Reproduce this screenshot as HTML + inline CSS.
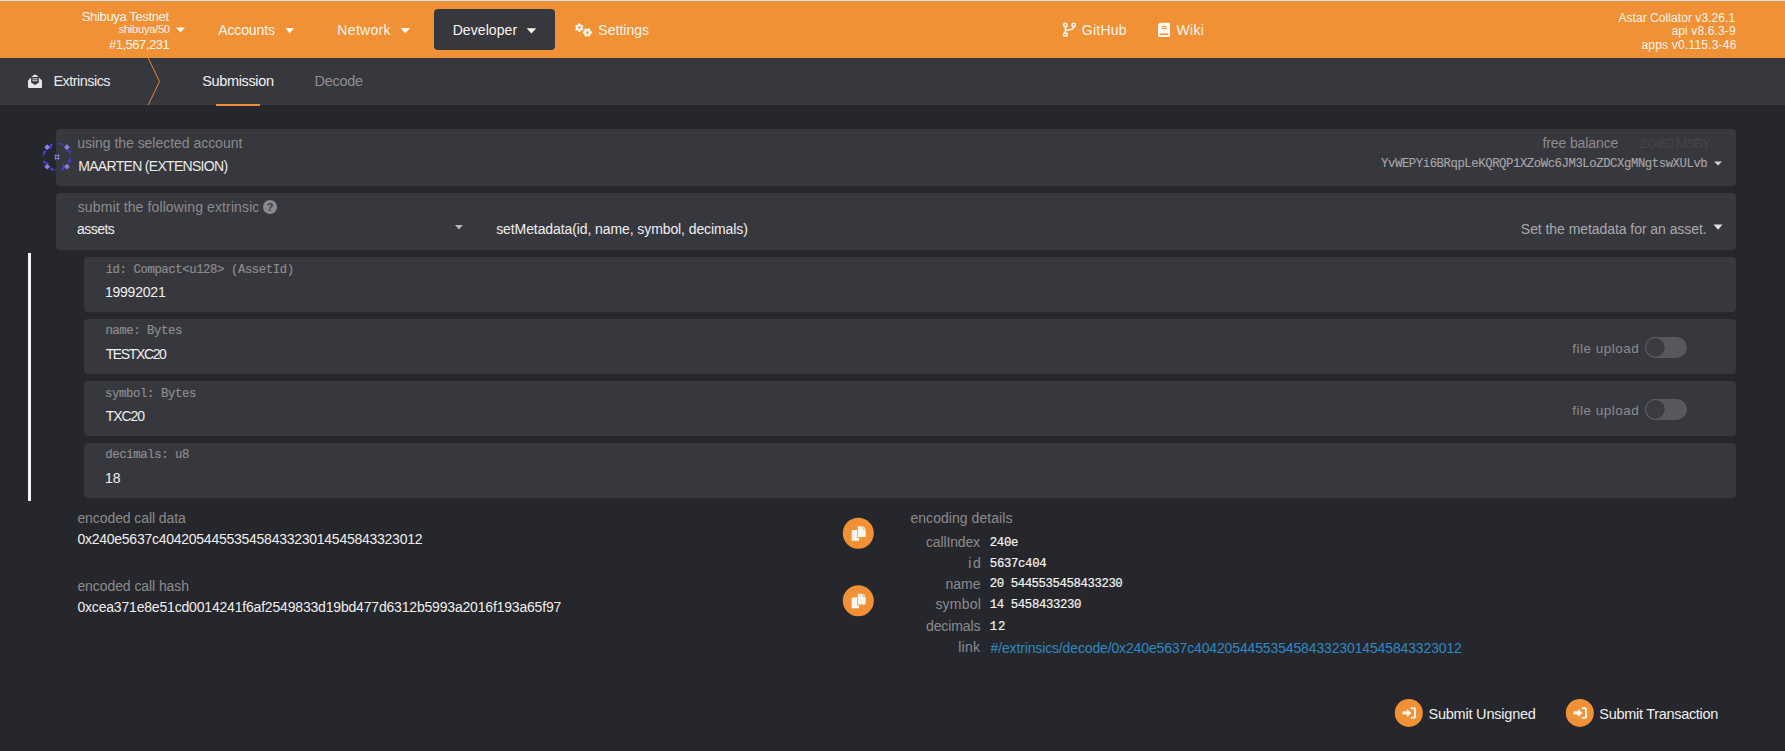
<!DOCTYPE html>
<html><head><meta charset="utf-8"><title>Extrinsics</title>
<style>
html,body{margin:0;padding:0;width:1785px;height:751px;overflow:hidden;background:#26272c;font-family:"Liberation Sans",sans-serif;}
.a{position:absolute;}
.ov{position:absolute;left:0;top:0;}
</style></head><body>
<div class="a" style="left:0;top:0;width:1785px;height:58px;background:#f19135"></div>
<div class="a" style="left:0;top:0;width:1785px;height:1px;background:#d2e0ec"></div>
<div class="a" style="left:434px;top:9px;width:121px;height:41px;border-radius:4px;background:#37383e"></div>
<div class="a" style="left:0;top:58px;width:1785px;height:47px;background:#37383d"></div>
<div class="a" style="left:0;top:104px;width:1785px;height:1px;background:#3b3c41"></div>
<div class="a" style="left:216px;top:104px;width:44px;height:2px;background:#f19135"></div>
<div class="a" style="left:56px;top:129px;width:1680px;height:57px;border-radius:4px;background:#37383e"></div>
<div class="a" style="left:56px;top:193px;width:1680px;height:57px;border-radius:4px;background:#37383e"></div>
<div class="a" style="left:28px;top:253px;width:3px;height:248px;background:#f4f4f4"></div>
<div class="a" style="left:84px;top:257px;width:1652px;height:55px;border-radius:4px;background:#37383e"></div>
<div class="a" style="left:84px;top:319px;width:1652px;height:55px;border-radius:4px;background:#37383e"></div>
<div class="a" style="left:84px;top:381px;width:1652px;height:55px;border-radius:4px;background:#37383e"></div>
<div class="a" style="left:84px;top:443px;width:1652px;height:55px;border-radius:4px;background:#37383e"></div>
<svg class="ov" width="1785" height="751" viewBox="0 0 1785 751">
<polygon points="176,27.5 185,27.5 180.5,32.5" fill="#fdf6ee"/><polygon points="285.3,27.9 294.1,27.9 289.70000000000005,33.4" fill="#fdf6ee"/><polygon points="400.6,27.9 410,27.9 405.3,33.4" fill="#fdf6ee"/><polygon points="526.7,28.2 536.2,28.2 531.45,33.6" fill="#fdf6ee"/><polygon points="1714,161.4 1722,161.4 1718.0,165.6" fill="#d0d0d0"/><polygon points="454.9,224.9 462.9,224.9 458.9,229.4" fill="#b9b9ba"/><polygon points="1713.6,224.6 1722.5,224.6 1718.05,229.8" fill="#e0e0e0"/><polygon points="582.58,27.94 583.47,29.00 582.60,30.51 581.24,30.27 580.65,30.61 580.17,31.91 578.43,31.91 577.95,30.61 577.36,30.27 576.00,30.51 575.13,29.00 576.02,27.94 576.02,27.26 575.13,26.20 576.00,24.69 577.36,24.93 577.95,24.59 578.43,23.29 580.17,23.29 580.65,24.59 581.24,24.93 582.60,24.69 583.47,26.20 582.58,27.26" fill="#fdf6ee"/><circle cx="579.3" cy="27.6" r="1.25" fill="#f19135"/><polygon points="590.55,31.09 591.91,31.59 591.91,33.41 590.55,33.91 590.19,34.52 590.45,35.95 588.86,36.86 587.76,35.93 587.04,35.93 585.94,36.86 584.35,35.95 584.61,34.52 584.25,33.91 582.89,33.41 582.89,31.59 584.25,31.09 584.61,30.48 584.35,29.05 585.94,28.14 587.04,29.07 587.76,29.07 588.86,28.14 590.45,29.05 590.19,30.48" fill="#fdf6ee"/><circle cx="587.4" cy="32.5" r="1.3" fill="#f19135"/><g fill="none" stroke="#fdf6ee" stroke-width="1.6"><circle cx="1065.4" cy="24.9" r="1.7"/><circle cx="1073.7" cy="24.9" r="1.7"/><circle cx="1065.4" cy="34.6" r="1.7"/><path d="M1065.4 26.6 V32.9 M1073.7 26.6 C1073.7 29.6 1071 29.7 1065.4 30.2"/></g><path d="M1159.6 22.8 H1168.6 Q1170 22.8 1170 24.2 V37 H1159.4 Q1158 37 1158 35.6 V24.6 Z" fill="#fdf6ee"/><rect x="1161.6" y="26.2" width="5.4" height="0.9" fill="#f19135"/><rect x="1161.6" y="28.0" width="5.4" height="0.9" fill="#f19135"/><rect x="1159.8" y="33.6" width="8.4" height="1.5" rx="0.6" fill="#f19135"/><path d="M28 80.4 L33.6 75 Q35 73.9 36.4 75 L42 80.4 V87 Q42 88 41 88 H29 Q28 88 28 87 Z" fill="#e6e6e6"/><path d="M31.1 76.9 H38.9 V82.4 L35 85 L31.1 82.4 Z" fill="#37383d"/><rect x="32.4" y="78.4" width="5.2" height="0.9" fill="#e6e6e6"/><rect x="32.4" y="80.3" width="5.2" height="0.9" fill="#e6e6e6"/><polyline points="148.2,58 159.5,81.5 148.2,105" fill="none" stroke="#f19135" stroke-width="0.9"/><g fill="#4a3bd8"><polygon points="50,150.5 53.2,143.5 49.5,144.5"/><polygon points="57.5,143 64.5,146.2 62,143.2"/><polygon points="64.5,150 71,153.6 70.5,150.5"/><polygon points="43,157 47,150.5 43.2,150.8"/><polygon points="43,160 50,163.7 43.5,163.5"/><polygon points="50,167 56.5,170.6 51,170.5"/><polygon points="60.8,170.6 64,162.6 64.2,170.3"/><polygon points="71,156.8 67,162.6 70.8,162.4"/></g><g fill="#8a80e6"><polygon points="47.2,144.3 50.1,147.2 47.2,150.1 44.3,147.2"/><polygon points="66.9,144.3 69.8,147.2 66.9,150.1 64,147.2"/><polygon points="47.2,163.8 50.1,166.7 47.2,169.6 44.3,166.7"/><polygon points="66.9,163.8 69.8,166.7 66.9,169.6 64,166.7"/></g><g fill="none" stroke="#8a80e6" stroke-width="0.9"><path d="M55.6 154.3 V159.8 M58.4 154.3 V159.8 M54.4 155.6 H59.7 M54.4 158.4 H59.7"/></g><circle cx="270" cy="207" r="7" fill="#8c8b8c"/><text x="270" y="211" text-anchor="middle" font-family="'Liberation Sans', sans-serif" font-weight="bold" font-size="11" fill="#37383e">?</text><rect x="1645" y="336.9" width="42" height="21" rx="10.5" fill="#57585d"/><circle cx="1655.4" cy="347.4" r="9.9" fill="#3b3c41" stroke="#606166" stroke-width="1"/><rect x="1645" y="398.9" width="42" height="21" rx="10.5" fill="#57585d"/><circle cx="1655.4" cy="409.4" r="9.9" fill="#3b3c41" stroke="#606166" stroke-width="1"/><circle cx="858.3" cy="533.3" r="15.5" fill="#f19135"/><rect x="851.7" y="530.0" width="7.4" height="10.7" rx="0.8" fill="#fdf6ee"/><path d="M857 525.6 H863 L866.4 529.0 V537.7 H857 Z" fill="#f19135"/><path d="M857.7 526.3 H862.6 V529.4 H865.7 V536.5 Q865.7 537.0 865.2 537.0 H858.2 Q857.7 537.0 857.7 536.5 Z" fill="#fdf6ee"/><path d="M863.2 526.3 L865.7 528.8 H863.2 Z" fill="#fdf6ee"/><circle cx="858.3" cy="600.8" r="15.5" fill="#f19135"/><rect x="851.7" y="597.5" width="7.4" height="10.7" rx="0.8" fill="#fdf6ee"/><path d="M857 593.1 H863 L866.4 596.5 V605.2 H857 Z" fill="#f19135"/><path d="M857.7 593.8 H862.6 V596.9 H865.7 V604.0 Q865.7 604.5 865.2 604.5 H858.2 Q857.7 604.5 857.7 604.0 Z" fill="#fdf6ee"/><path d="M863.2 593.8 L865.7 596.3 H863.2 Z" fill="#fdf6ee"/><circle cx="1408.8" cy="712.9" r="14" fill="#f19135"/><path d="M1402.2 712.9 Q1402.2 714.6 1403.6 714.6 H1406.9 V716.9 L1411.6 713 L1406.9 709.1 V711.3 H1403.6 Q1402.2 711.3 1402.2 712.9 Z" fill="#fdf6ee"/><path d="M1411.4 708.3 H1414.0 Q1415.0 708.3 1415.0 709.3 V716.7 Q1415.0 717.7 1414.0 717.7 H1411.4" fill="none" stroke="#fdf6ee" stroke-width="1.9" stroke-linecap="round"/><circle cx="1579.8" cy="712.9" r="14" fill="#f19135"/><path d="M1573.2 712.9 Q1573.2 714.6 1574.6 714.6 H1577.9 V716.9 L1582.6 713 L1577.9 709.1 V711.3 H1574.6 Q1573.2 711.3 1573.2 712.9 Z" fill="#fdf6ee"/><path d="M1582.4 708.3 H1585.0 Q1586.0 708.3 1586.0 709.3 V716.7 Q1586.0 717.7 1585.0 717.7 H1582.4" fill="none" stroke="#fdf6ee" stroke-width="1.9" stroke-linecap="round"/>
<text x="81.81" y="20.80" font-family='"Liberation Sans", sans-serif' font-size="13" fill="#fdf6ee" textLength="87.29" lengthAdjust="spacing">Shibuya Testnet</text>
<text x="118.69" y="33.00" font-family='"Liberation Sans", sans-serif' font-size="11" fill="#fdf6ee" textLength="51.24" lengthAdjust="spacing">shibuya/50</text>
<text x="108.94" y="49.00" font-family='"Liberation Sans", sans-serif' font-size="13" fill="#fdf6ee" textLength="60.69" lengthAdjust="spacing">#1,567,231</text>
<text x="218.17" y="34.80" font-family='"Liberation Sans", sans-serif' font-size="14" fill="#fdf6ee" textLength="56.83" lengthAdjust="spacing">Accounts</text>
<text x="337.35" y="34.80" font-family='"Liberation Sans", sans-serif' font-size="14" fill="#fdf6ee" textLength="53.23" lengthAdjust="spacing">Network</text>
<text x="452.65" y="34.80" font-family='"Liberation Sans", sans-serif' font-size="14" fill="#fdf6ee" textLength="64.48" lengthAdjust="spacing">Developer</text>
<text x="598.26" y="34.80" font-family='"Liberation Sans", sans-serif' font-size="14" fill="#fdf6ee" textLength="50.84" lengthAdjust="spacing">Settings</text>
<text x="1081.80" y="35.00" font-family='"Liberation Sans", sans-serif' font-size="14" fill="#fdf6ee" textLength="44.79" lengthAdjust="spacing">GitHub</text>
<text x="1176.54" y="35.00" font-family='"Liberation Sans", sans-serif' font-size="14" fill="#fdf6ee" textLength="27.40" lengthAdjust="spacing">Wiki</text>
<text x="1618.38" y="21.60" font-family='"Liberation Sans", sans-serif' font-size="12" fill="#fdf6ee" textLength="116.71" lengthAdjust="spacing">Astar Collator v3.26.1</text>
<text x="1671.49" y="35.20" font-family='"Liberation Sans", sans-serif' font-size="12" fill="#fdf6ee" textLength="64.08" lengthAdjust="spacing">api v8.6.3-9</text>
<text x="1641.49" y="48.50" font-family='"Liberation Sans", sans-serif' font-size="12" fill="#fdf6ee" textLength="94.84" lengthAdjust="spacing">apps v0.115.3-46</text>
<text x="53.41" y="86.00" font-family='"Liberation Sans", sans-serif' font-size="14.5" fill="#e8e8e8" textLength="57.21" lengthAdjust="spacing">Extrinsics</text>
<text x="202.24" y="86.00" font-family='"Liberation Sans", sans-serif' font-size="14.5" fill="#f2f2f2" textLength="71.80" lengthAdjust="spacing">Submission</text>
<text x="314.61" y="86.00" font-family='"Liberation Sans", sans-serif' font-size="14.5" fill="#8d8e92" textLength="48.43" lengthAdjust="spacing">Decode</text>
<text x="77.19" y="148.00" font-family='"Liberation Sans", sans-serif' font-size="14" fill="#8c8b8c" textLength="165.11" lengthAdjust="spacing">using the selected account</text>
<text x="78.25" y="170.70" font-family='"Liberation Sans", sans-serif' font-size="14" fill="#ebeaea" textLength="149.82" lengthAdjust="spacing">MAARTEN (EXTENSION)</text>
<text x="1542.40" y="147.90" font-family='"Liberation Sans", sans-serif' font-size="14" fill="#8c8b8c" textLength="75.92" lengthAdjust="spacing">free balance</text>
<text x="1639.32" y="147.90" font-family='"Liberation Sans", sans-serif' font-size="13.6" fill="#44454a" textLength="71.68" lengthAdjust="spacing">2.0452 MSBY</text>
<text x="1381.08" y="167.00" font-family='"Liberation Mono", monospace' font-size="12.3" fill="#a6a6a8" textLength="326.65" lengthAdjust="spacing" stroke="#a6a6a8" stroke-width="0.12">YvWEPYi6BRqpLeKQRQP1XZoWc6JM3LoZDCXgMNgtswXULvb</text>
<text x="77.71" y="212.00" font-family='"Liberation Sans", sans-serif' font-size="14" fill="#8c8b8c" textLength="181.66" lengthAdjust="spacing">submit the following extrinsic</text>
<text x="76.91" y="234.00" font-family='"Liberation Sans", sans-serif' font-size="14" fill="#f0efee" textLength="37.90" lengthAdjust="spacing">assets</text>
<text x="496.21" y="234.20" font-family='"Liberation Sans", sans-serif' font-size="14" fill="#f0efee" textLength="251.66" lengthAdjust="spacing">setMetadata(id, name, symbol, decimals)</text>
<text x="1520.86" y="234.10" font-family='"Liberation Sans", sans-serif' font-size="14" fill="#a9a9aa" textLength="185.81" lengthAdjust="spacing">Set the metadata for an asset.</text>
<text x="105.64" y="272.50" font-family='"Liberation Mono", monospace' font-size="12.3" fill="#8c8b8c" textLength="188.42" lengthAdjust="spacing" stroke="#8c8b8c" stroke-width="0.2">id: Compact&lt;u128&gt; (AssetId)</text>
<text x="104.93" y="296.70" font-family='"Liberation Sans", sans-serif' font-size="14" fill="#f0efee" textLength="60.75" lengthAdjust="spacing">19992021</text>
<text x="105.42" y="334.30" font-family='"Liberation Mono", monospace' font-size="12.3" fill="#8c8b8c" textLength="76.89" lengthAdjust="spacing" stroke="#8c8b8c" stroke-width="0.2">name: Bytes</text>
<text x="105.69" y="358.70" font-family='"Liberation Sans", sans-serif' font-size="14" fill="#f0efee" textLength="61.16" lengthAdjust="spacing">TESTXC20</text>
<text x="1572.31" y="352.90" font-family='"Liberation Sans", sans-serif' font-size="13.5" fill="#8c8b8c" textLength="66.56" lengthAdjust="spacing">file upload</text>
<text x="105.00" y="396.70" font-family='"Liberation Mono", monospace' font-size="12.3" fill="#8c8b8c" textLength="91.32" lengthAdjust="spacing" stroke="#8c8b8c" stroke-width="0.2">symbol: Bytes</text>
<text x="105.69" y="420.70" font-family='"Liberation Sans", sans-serif' font-size="14" fill="#f0efee" textLength="39.26" lengthAdjust="spacing">TXC20</text>
<text x="1572.31" y="414.90" font-family='"Liberation Sans", sans-serif' font-size="13.5" fill="#8c8b8c" textLength="66.56" lengthAdjust="spacing">file upload</text>
<text x="105.17" y="458.00" font-family='"Liberation Mono", monospace' font-size="12.3" fill="#8c8b8c" textLength="84.34" lengthAdjust="spacing" stroke="#8c8b8c" stroke-width="0.2">decimals: u8</text>
<text x="104.93" y="482.80" font-family='"Liberation Sans", sans-serif' font-size="14" fill="#f0efee" textLength="15.67" lengthAdjust="spacing">18</text>
<text x="77.41" y="522.90" font-family='"Liberation Sans", sans-serif' font-size="14" fill="#8c8b8c" textLength="108.39" lengthAdjust="spacing">encoded call data</text>
<text x="77.45" y="544.10" font-family='"Liberation Sans", sans-serif' font-size="14" fill="#f0efee" textLength="345.05" lengthAdjust="spacing">0x240e5637c40420544553545843323014545843323012</text>
<text x="77.41" y="590.80" font-family='"Liberation Sans", sans-serif' font-size="14" fill="#8c8b8c" textLength="111.60" lengthAdjust="spacing">encoded call hash</text>
<text x="77.45" y="612.00" font-family='"Liberation Sans", sans-serif' font-size="14" fill="#f0efee" textLength="483.85" lengthAdjust="spacing">0xcea371e8e51cd0014241f6af2549833d19bd477d6312b5993a2016f193a65f97</text>
<text x="910.41" y="523.10" font-family='"Liberation Sans", sans-serif' font-size="14" fill="#8c8b8c" textLength="102.00" lengthAdjust="spacing">encoding details</text>
<text x="926.01" y="546.60" font-family='"Liberation Sans", sans-serif' font-size="14" fill="#8c8b8c" textLength="54.05" lengthAdjust="spacing">callIndex</text>
<text x="968.36" y="567.90" font-family='"Liberation Sans", sans-serif' font-size="14" fill="#8c8b8c" textLength="12.44" lengthAdjust="spacing">id</text>
<text x="945.57" y="588.50" font-family='"Liberation Sans", sans-serif' font-size="14" fill="#8c8b8c" textLength="34.95" lengthAdjust="spacing">name</text>
<text x="935.41" y="609.40" font-family='"Liberation Sans", sans-serif' font-size="14" fill="#8c8b8c" textLength="45.43" lengthAdjust="spacing">symbol</text>
<text x="926.01" y="630.70" font-family='"Liberation Sans", sans-serif' font-size="14" fill="#8c8b8c" textLength="54.39" lengthAdjust="spacing">decimals</text>
<text x="958.26" y="652.00" font-family='"Liberation Sans", sans-serif' font-size="14" fill="#8c8b8c" textLength="21.62" lengthAdjust="spacing">link</text>
<text x="989.74" y="545.50" font-family='"Liberation Mono", monospace' font-size="12.3" fill="#f4f3f2" textLength="28.68" lengthAdjust="spacing" stroke="#f4f3f2" stroke-width="0.2">240e</text>
<text x="989.83" y="566.80" font-family='"Liberation Mono", monospace' font-size="12.3" fill="#f4f3f2" textLength="56.79" lengthAdjust="spacing" stroke="#f4f3f2" stroke-width="0.2">5637c404</text>
<text x="989.74" y="587.00" font-family='"Liberation Mono", monospace' font-size="12.3" fill="#f4f3f2" textLength="133.02" lengthAdjust="spacing" stroke="#f4f3f2" stroke-width="0.2">20 5445535458433230</text>
<text x="989.71" y="608.00" font-family='"Liberation Mono", monospace' font-size="12.3" fill="#f4f3f2" textLength="91.75" lengthAdjust="spacing" stroke="#f4f3f2" stroke-width="0.2">14 5458433230</text>
<text x="989.71" y="629.70" font-family='"Liberation Mono", monospace' font-size="12.3" fill="#f4f3f2" textLength="15.56" lengthAdjust="spacing" stroke="#f4f3f2" stroke-width="0.2">12</text>
<text x="990.54" y="652.70" font-family='"Liberation Sans", sans-serif' font-size="14" fill="#2f89c0" textLength="471.37" lengthAdjust="spacing">#/extrinsics/decode/0x240e5637c40420544553545843323014545843323012</text>
<text x="1428.44" y="719.40" font-family='"Liberation Sans", sans-serif' font-size="14.5" fill="#f0efee" textLength="107.49" lengthAdjust="spacing">Submit Unsigned</text>
<text x="1599.34" y="719.40" font-family='"Liberation Sans", sans-serif' font-size="14.5" fill="#f0efee" textLength="119.00" lengthAdjust="spacing">Submit Transaction</text>
</svg>
</body></html>
